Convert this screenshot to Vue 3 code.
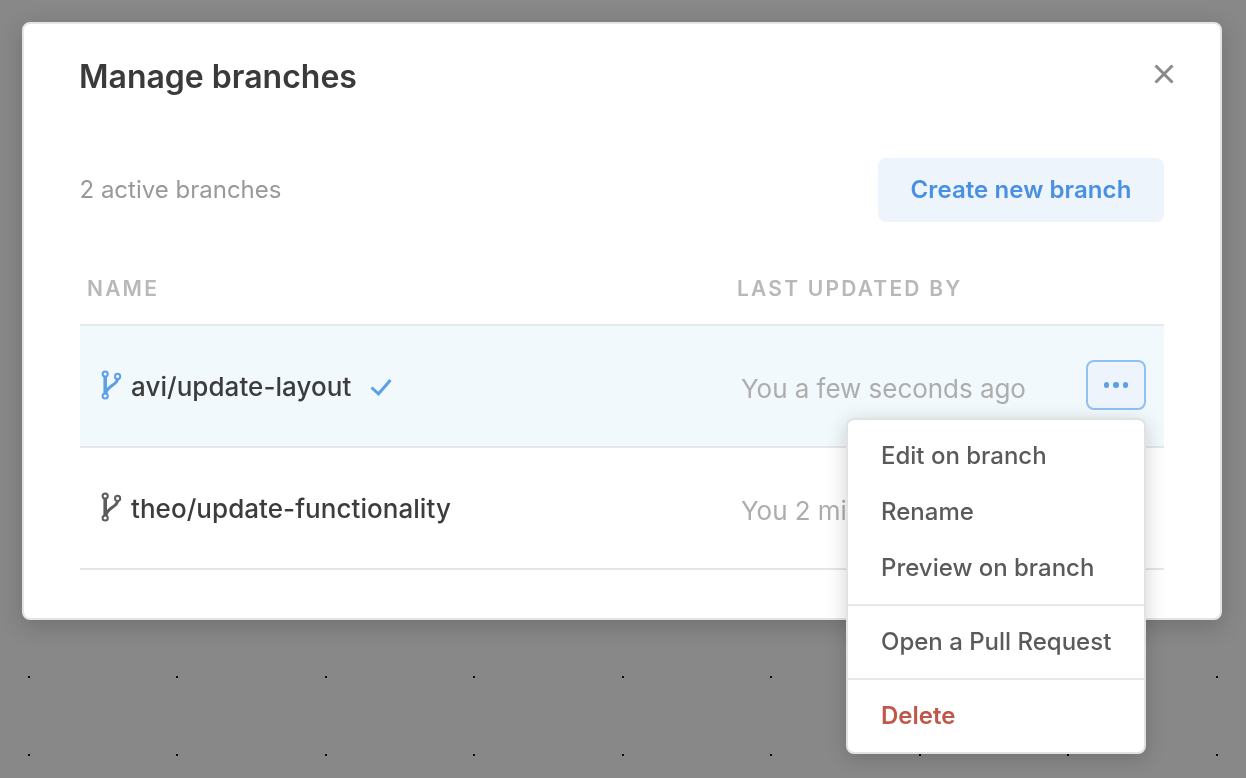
<script setup>
const xs = [29, 177, 326, 474, 623, 771, 920, 1068, 1217]
const ys = [677, 755]
const dots = []
for (const y of ys) for (const x of xs) dots.push({ x, y })
const branches = [
  { name: 'avi/update-layout', by: 'You a few seconds ago', active: true },
  { name: 'theo/update-functionality', by: 'You 2 minutes ago', active: false }
]
</script>

<template>
  <div class="page">
    <svg class="dots" width="1246" height="778" aria-hidden="true">
      <rect v-for="d in dots" :key="d.x + '-' + d.y" :x="d.x - 1" :y="d.y - 1" width="2" height="2" fill="#0c0c0c" />
    </svg>
    <section class="modal">
      <header class="head">
        <h1>Manage branches</h1>
        <svg class="close" width="20" height="20" viewBox="0 0 20 20" aria-label="Close">
          <path d="M1.5 1.5 18.5 18.5M18.5 1.5 1.5 18.5" stroke="#8a8a8a" stroke-width="3" fill="none" />
        </svg>
      </header>
      <div class="toolbar">
        <span class="count">2 active branches</span>
        <button class="create">Create new branch</button>
      </div>
      <div class="columns">
        <span class="col-name">NAME</span>
        <span class="col-by">LAST UPDATED BY</span>
      </div>
      <div v-for="b in branches" :key="b.name" class="row" :class="{ active: b.active }">
        <div class="name">
          <svg class="branch" width="20" height="32" viewBox="0 0 20 32" fill="none" stroke="currentColor">
            <circle cx="3.2" cy="3" r="2.6" stroke-width="2" />
            <circle cx="3.2" cy="25" r="2.6" stroke-width="2" />
            <circle cx="15.6" cy="5.4" r="2.6" stroke-width="2" />
            <path d="M3.2 5.3V22.7" stroke-width="3.6" />
            <path d="M15.6 7.7C15.4 14 5.6 14.5 4 22" stroke-width="3" />
          </svg>
          <span class="label">{{ b.name }}</span>
          <svg v-if="b.active" class="check" width="22" height="18" viewBox="0 0 22 18" fill="none">
            <path d="M1.5 9.5 8.5 15.8 20.5 2" stroke="#5a9fe8" stroke-width="3" />
          </svg>
        </div>
        <div class="by">{{ b.by }}</div>
        <button v-if="b.active" class="more" aria-label="More">
          <i></i><i></i><i></i>
        </button>
      </div>
    </section>
    <div class="menu">
      <div class="group">
        <div class="item">Edit on branch</div>
        <div class="item">Rename</div>
        <div class="item">Preview on branch</div>
      </div>
      <div class="group">
        <div class="item">Open a Pull Request</div>
      </div>
      <div class="group">
        <div class="item danger">Delete</div>
      </div>
    </div>
  </div>
</template>

<style>
html, body { margin: 0; background: #888; }
</style>

<style scoped>
.page {
  position: relative;
  width: 1246px;
  height: 778px;
  overflow: hidden;
  background: #888;
  padding: 22px;
  box-sizing: border-box;
  font-family: Inter, "Liberation Sans", sans-serif;
}
.dots { position: absolute; left: 0; top: 0; }
.modal {
  position: relative;
  box-sizing: border-box;
  width: 1200px;
  height: 598px;
  background: #fff;
  border: 2px solid #e4e4e4;
  border-radius: 8px;
  box-shadow: 0 6px 24px rgba(0, 0, 0, .18);
  padding: 0 56px;
  will-change: transform;
}
.head {
  display: flex;
  justify-content: space-between;
  align-items: flex-start;
  height: 134px;
}
h1 {
  margin: 33px 0 0 -1px;
  font-size: 32px;
  line-height: 40px;
  font-weight: 600;
  color: #3a3a3a;
}
.close { margin: 40px -10px 0 0; }
.toolbar {
  display: flex;
  justify-content: space-between;
  align-items: center;
  height: 64px;
}
.count { font-size: 24px; color: #999; position: relative; top: -1px; margin-left: -.5px; }
.create {
  width: 286px;
  height: 64px;
  border: 0;
  border-radius: 8px;
  background: #edf4fc;
  color: #4a90e2;
  font: 600 24px/64px Inter, "Liberation Sans", sans-serif;
  letter-spacing: .08px;
  padding: 0;
}
.columns {
  display: flex;
  height: 104px;
  box-sizing: border-box;
  padding: 52px 0 0 7px;
  border-bottom: 2px solid #e6e9ea;
  font-size: 21px;
  line-height: 30px;
  font-weight: 600;
  letter-spacing: 2.2px;
  color: #b8b8b8;
}
.col-name { width: 650px; }
.row {
  position: relative;
  display: flex;
  align-items: flex-start;
  height: 122px;
  box-sizing: border-box;
  border-bottom: 2px solid #e6e6e6;
  padding: 45px 0 0 22px;
  color: #5c5c5c;
}
.row.active { background: #f2f9fd; color: #5a9fe8; }
.name { display: flex; align-items: center; width: 639px; height: 32px; }
.branch { flex: none; margin-right: 9px; overflow: visible; }
.label { font-size: 26px; font-weight: 500; color: #3c3c3c; letter-spacing: .05px; margin-top: -2px; }
.check { margin-left: 19px; }
.by { font-size: 26px; line-height: 32px; color: #adadad; margin-top: 2px; white-space: nowrap; letter-spacing: -.04px; }
.more {
  position: absolute;
  left: 1006px;
  top: 34px;
  width: 60px;
  height: 50px;
  box-sizing: border-box;
  display: flex;
  align-items: center;
  justify-content: center;
  gap: 4px;
  padding: 0;
  background: #edf4fc;
  border: 2px solid #8fc1f1;
  border-radius: 8px;
}
.more i { width: 5.5px; height: 5.5px; border-radius: 50%; background: #5a9fe8; }
.menu {
  position: absolute;
  left: 846px;
  top: 418px;
  width: 300px;
  height: 336px;
  box-sizing: border-box;
  background: #fff;
  border: 2px solid #e2e2e2;
  border-radius: 8px;
  box-shadow: 0 4px 20px rgba(0, 0, 0, .18);
  font-size: 24px;
  font-weight: 500;
  color: #5a5a5a;
  will-change: transform;
}
.group { padding: 8px 0; border-bottom: 2px solid #e8e8e8; }
.group:last-child { border-bottom: 0; }
.item { height: 56px; line-height: 56px; padding-left: 33px; }
.danger { color: #c0574b; font-weight: 600; }
</style>
